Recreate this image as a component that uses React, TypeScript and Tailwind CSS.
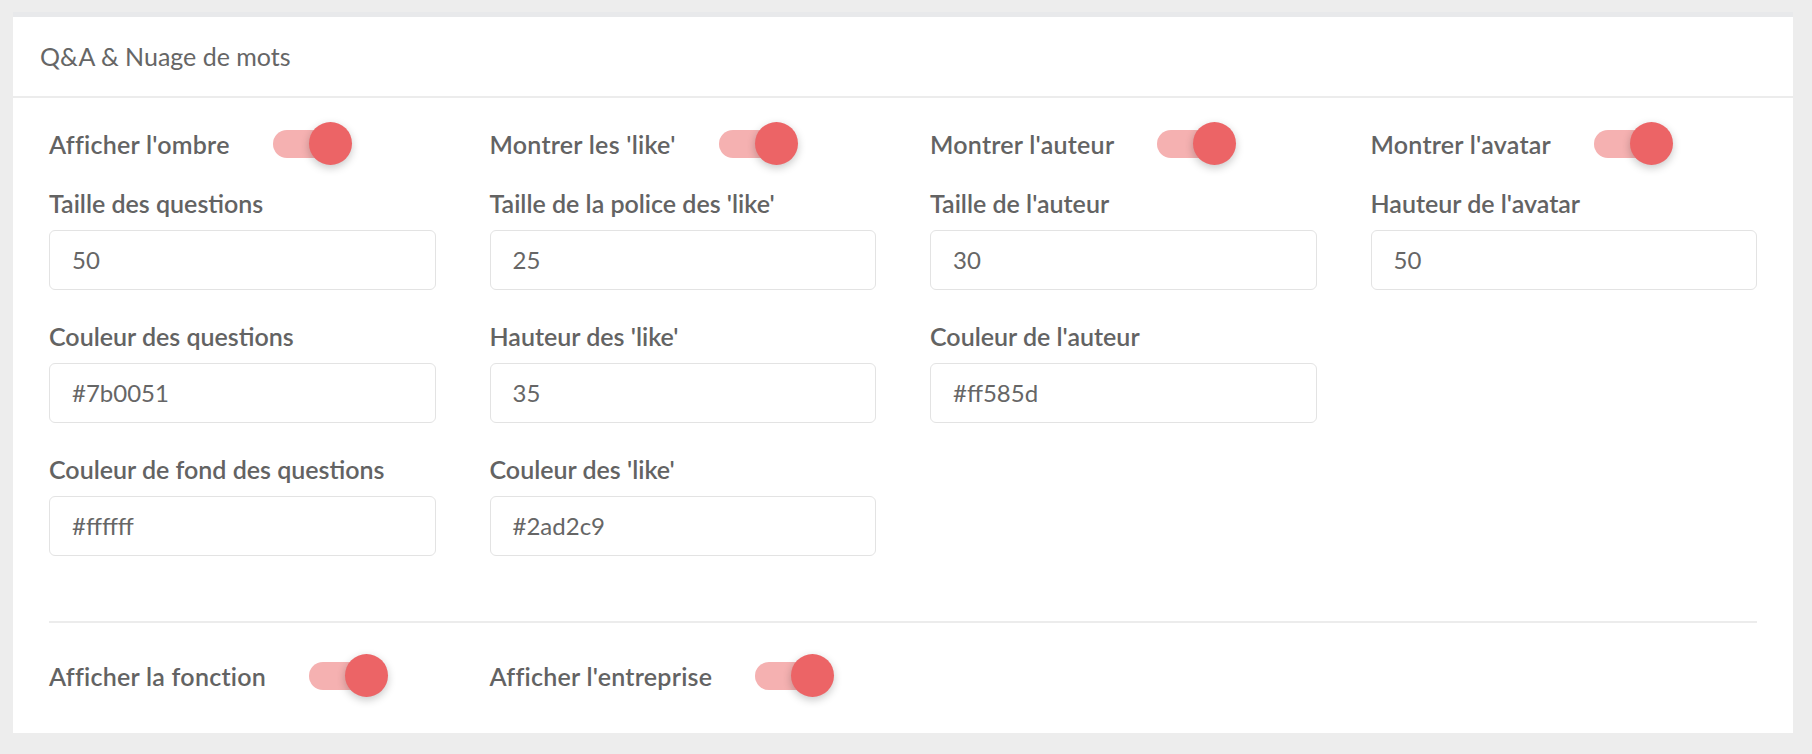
import type { ReactNode } from "react";

type Field = { label: string; value: string };

const toggles = ["Afficher l'ombre", "Montrer les 'like'", "Montrer l'auteur", "Montrer l'avatar"];

const columns: Field[][] = [
  [
    { label: "Taille des questions", value: "50" },
    { label: "Couleur des questions", value: "#7b0051" },
    { label: "Couleur de fond des questions", value: "#ffffff" },
  ],
  [
    { label: "Taille de la police des 'like'", value: "25" },
    { label: "Hauteur des 'like'", value: "35" },
    { label: "Couleur des 'like'", value: "#2ad2c9" },
  ],
  [
    { label: "Taille de l'auteur", value: "30" },
    { label: "Couleur de l'auteur", value: "#ff585d" },
  ],
  [{ label: "Hauteur de l'avatar", value: "50" }],
];

function Switch() {
  return (
    <span className="relative ml-[43px] block h-[43px] w-[79px] shrink-0">
      <span className="absolute top-[7.5px] left-0 h-[28px] w-[70px] rounded-full bg-[#f5b1b1]" />
      <span className="absolute top-0 right-0 h-[43px] w-[43px] rounded-full bg-[#ec6466] shadow-[0_3px_8px_rgba(0,0,0,0.22)]" />
    </span>
  );
}

function ToggleRow({ children }: { children: ReactNode }) {
  return (
    <div className="flex h-[43px] items-center">
      <span className="text-[25px] leading-[30px] font-semibold tracking-[0.01em] text-[#636363]">{children}</span>
      <Switch />
    </div>
  );
}

function TextField({ field }: { field: Field }) {
  return (
    <div className="mb-[31px]">
      <label className="block h-[30px] text-[25px] leading-[30px] font-semibold text-[#636363]">{field.label}</label>
      <div className="mt-[12px] flex h-[60px] items-center rounded-[6px] border border-[#e3e3e3] bg-white px-[22px] text-[24px] text-[#666666]">
        {field.value}
      </div>
    </div>
  );
}

export default function App() {
  return (
    <div className="min-h-[754px] bg-[#ededed] pt-[12px] pl-[13px] font-['Lato',sans-serif]">
      <section className="w-[1780px] border-t-[5px] border-[#e8e9eb] bg-white">
        <header className="flex h-[81px] items-center border-b-2 border-[#ececec] pl-[27px]">
          <h2 className="text-[25px] text-[#666666]">Q&amp;A &amp; Nuage de mots</h2>
        </header>
        <div className="px-[36px] pt-[24px] pb-[36px]">
          <div className="grid grid-cols-4 gap-x-[54px]">
            {toggles.map((t) => (
              <ToggleRow key={t}>{t}</ToggleRow>
            ))}
          </div>
          <div className="mt-[23px] grid grid-cols-4 gap-x-[54px]">
            {columns.map((col, i) => (
              <div key={i}>
                {col.map((f) => (
                  <TextField field={f} key={f.label} />
                ))}
              </div>
            ))}
          </div>
          <div className="mt-[34px] border-t-2 border-[#ececec] pt-[31px]">
            <div className="grid grid-cols-4 gap-x-[54px]">
              <ToggleRow>Afficher la fonction</ToggleRow>
              <ToggleRow>Afficher l'entreprise</ToggleRow>
            </div>
          </div>
        </div>
      </section>
    </div>
  );
}
